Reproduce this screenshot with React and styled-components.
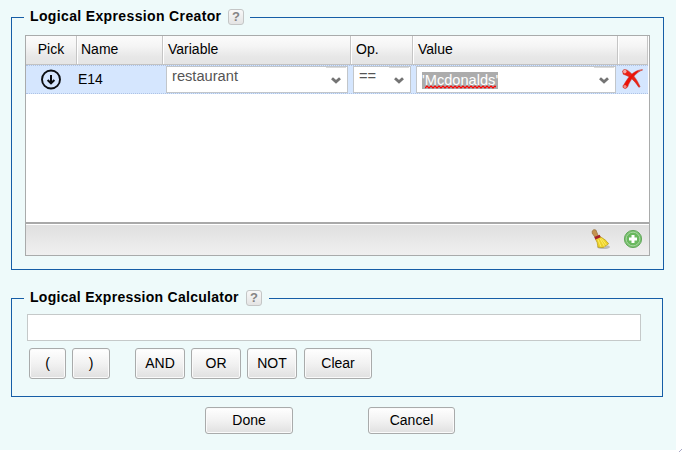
import React from "react";
import styled, { createGlobalStyle } from "styled-components";

const GlobalStyle = createGlobalStyle`
  * { box-sizing: border-box; }
  body { margin: 0; background: #fff; overflow: hidden; }
`;

const Window = styled.div`
  position: relative;
  width: 682px;
  height: 452px;
  overflow: hidden;
  background: #fff;
  font: 14px/16px "Liberation Sans", Arial, sans-serif;
  color: #000;
`;

const Page = styled.main`
  display: flow-root;
  width: 676px;
  height: 450px;
  padding-left: 11px;
  background: #eefafa;
`;

const Group = styled.fieldset`
  min-width: 0;
  width: ${(p) => p.$width}px;
  height: ${(p) => p.$height}px;
  margin: ${(p) => p.$top}px 0 0;
  padding: 0 0 0 ${(p) => p.$inset}px;
  border: 1px solid #165da6;
`;

const Legend = styled.legend`
  display: flex;
  align-items: flex-start;
  width: ${(p) => p.$width}px;
  height: 19px;
  margin-left: ${(p) => 12 - p.$inset}px;
  padding: 1px 0 0 6px;
  font-weight: bold;
  white-space: nowrap;
`;

const LegendText = styled.span`
  width: ${(p) => p.$width}px;
  margin-top: -1px;
  letter-spacing: ${(p) => p.$track}px;
`;

const Help = styled.button`
  width: 16px;
  height: 16px;
  padding: 0;
  border: 1px solid #c4c6c6;
  border-radius: 3px;
  background: linear-gradient(#f8f8f8, #e4e4e4);
  color: #848484;
  font: bold 13px/14px "Liberation Sans", Arial, sans-serif;
`;

const Table = styled.section`
  display: flex;
  flex-direction: column;
  width: 625px;
  height: 221px;
  margin-top: 8px;
  border: 1px solid #a9abab;
  background: #fff;
`;

const columns = "51px 86px 188px 62px 205px 30px";

const Header = styled.div`
  display: grid;
  grid-template-columns: ${columns};
  width: 622px;
  height: 29px;
  border-bottom: 1px solid #c2c2c2;
  background: linear-gradient(#fbfbfb, #f5f5f5 35%, #e7e7e7 75%, #e5e5e5);
`;

const HeaderCell = styled.div`
  padding: 5px 0 0 ${(p) => (p.$center ? 0 : p.$indent ?? 4)}px;
  text-align: ${(p) => (p.$center ? "center" : "left")};
  border-left: ${(p) => (p.$center ? 0 : 1)}px solid #fff;
  border-right: 1px solid #c5c5c5;
`;

const Row = styled.div`
  display: grid;
  grid-template-columns: 50px 90px 187px 63px 202px 30px;
  width: 622px;
  height: 29px;
  border-top: 1px dotted #aec3e5;
  border-bottom: 1px dotted #aec3e5;
  background: #d5e6fe;
`;

const PickCell = styled.div`
  padding-top: 3px;
  text-align: center;
  line-height: 0;
`;

const NameCell = styled.div`
  padding: 5px 0 0 2px;
`;

const DeleteCell = styled.div`
  padding: 3px 0 0 4px;
  line-height: 0;
`;

const Combo = styled.div`
  display: flex;
  justify-content: space-between;
  width: ${(p) => p.$width}px;
  height: 27px;
  padding-left: 5px;
  border: 1px solid #c2c6ca;
  background: #fff;
  color: #555;
  font-size: 14.67px;
`;

const ComboText = styled.span`
  padding-top: 1px;
`;

const Selected = styled.span`
  align-self: flex-start;
  height: 17px;
  margin-top: 5px;
  background: #acacac;
  color: #fff;
  line-height: 17px;
  font-size: 14.6px;
`;

const Misspelt = styled.span`
  display: inline-block;
  position: relative;
`;

const Squiggle = styled.svg`
  position: absolute;
  left: 0;
  top: 13px;
`;

const Toggle = styled.span`
  display: flex;
  justify-content: center;
  width: 20px;
  height: 24px;
  margin-right: 1px;
  border-top: 1px solid #dadada;
  padding-top: 9px;
`;

const Footer = styled.div`
  display: flex;
  align-items: flex-start;
  justify-content: flex-end;
  gap: 12px;
  height: 33px;
  margin-top: auto;
  padding: 5px 6px 0 0;
  border-top: 2px solid #a9a9a9;
  box-shadow: inset 0 1px #fff;
  background: linear-gradient(#dfdfdf, #f0f0f0);
`;

const Expression = styled.input`
  display: block;
  width: 614px;
  height: 27px;
  margin: 6px 0 7px;
  border: 1px solid #c5c9c9;
  padding: 0 5px;
  background: #fff;
`;

const Keys = styled.div`
  display: flex;
  gap: 6px;
  padding-left: 2px;
`;

const Button = styled.button`
  width: ${(p) => p.$width}px;
  height: ${(p) => p.$height || 31}px;
  margin-left: ${(p) => p.$space || 0}px;
  padding: 0 0 1px;
  border: 1px solid #a9abab;
  border-radius: 3px;
  background: linear-gradient(#fff, #f2f2f2 50%, #e0e0e0);
  box-shadow: inset 0 0 0 1px #fafafa;
  color: #000;
  font: 14px/16px "Liberation Sans", Arial, sans-serif;
`;

const Actions = styled.div`
  display: flex;
  gap: 75px;
  padding: 10px 0 0 194px;
`;

const Grip = styled.svg`
  position: absolute;
  right: 0;
  bottom: 0;
`;

const Chevron = () => (
  <Toggle>
    <svg width="10" height="8" viewBox="0 0 10 8">
      <path d="M1 1.2 5 4.9 9 1.2" fill="none" stroke="#747474" strokeWidth="2.8" />
    </svg>
  </Toggle>
);

const PickIcon = () => (
  <svg width="22" height="22" viewBox="0 0 22 22" fill="none" stroke="#0b0e12">
    <circle cx="11" cy="10.5" r="9" strokeWidth="1.9" />
    <path d="M11 6v8M7.6 11 11 14.3 14.4 11" strokeWidth="2" />
  </svg>
);

const DeleteIcon = () => (
  <svg width="22" height="22" viewBox="0 0 22 22">
    <path d="M.5 2Q1.5-.2 4.8.9C9.6 3.5 15 10 18 17.6Q17.5 19 16.4 17.8C12.8 12 8.4 7.5 1.2 5.2Z" fill="#ed2014" stroke="#bd3027" strokeWidth=".5" />
    <path d="M20.5.8C13.8 3.8 8.5 10.2 5.6 18Q3.2 21 .9 18.3Q.6 16.6 2 15.4C6.2 8 12.4.5 20.5.8Z" fill="#ed1208" stroke="#c43a31" strokeWidth=".5" />
    <circle cx="2.8" cy="2.6" r="1.8" fill="#f5aaa4" />
    <circle cx="3" cy="17.6" r="1.6" fill="#ee8d86" />
    <path d="M16 2.2 20.5 1" stroke="#d86660" />
  </svg>
);

const BroomIcon = () => (
  <svg width="20" height="21" viewBox="0 0 20 21">
    <ellipse cx="12.5" cy="18" rx="6.5" ry="2" fill="#bcbcbc" />
    <path d="M1.2 2.1Q2.5-.3 4.9 1L7.5 7.4 4.2 8.6 1.2 4.2Z" fill="#c4934f" stroke="#96703c" strokeWidth=".7" />
    <path d="M4.5 10 9.4 7.8C13.6 10.2 15.8 12 17.6 14.8L12.3 18.5 7 18.3Q6.6 13 4.5 10Z" fill="#ecd12b" stroke="#b59819" strokeWidth=".7" />
    <path d="m7 10.5 3 7.2m-1-8.2 4.5 8m-3-8 5 6.8" stroke="#fff06b" strokeWidth=".9" />
    <path d="M3.8 9.3 9.2 7" stroke="#a6202a" strokeWidth="2.6" />
  </svg>
);

const AddIcon = () => (
  <svg width="20" height="20" viewBox="0 0 20 20">
    <circle cx="10" cy="10" r="8.6" fill="#78bf6d" stroke="#64a95d" />
    <circle cx="10" cy="10" r="6.8" fill="#69b85e" stroke="#a4d69d" />
    <path d="M10 6v8M6 10h8" stroke="#fff" strokeWidth="3" />
  </svg>
);

export default function App() {
  return (
    <Window>
      <GlobalStyle />
      <Page>
        <Group $top={8} $width={653} $height={262} $inset={13}>
          <Legend $width={226} $inset={13}>
            <LegendText $width={198} $track={0.36}>Logical Expression Creator</LegendText>
            <Help>?</Help>
          </Legend>
          <Table>
            <Header>
              <HeaderCell $center>Pick</HeaderCell>
              <HeaderCell $indent={3}>Name</HeaderCell>
              <HeaderCell>Variable</HeaderCell>
              <HeaderCell>Op.</HeaderCell>
              <HeaderCell>Value</HeaderCell>
              <HeaderCell />
            </Header>
            <Row>
              <PickCell><PickIcon /></PickCell>
              <NameCell>E14</NameCell>
              <Combo $width={182}><ComboText>restaurant</ComboText><Chevron /></Combo>
              <Combo $width={58}><ComboText>==</ComboText><Chevron /></Combo>
              <Combo $width={200}>
                <Selected>
                  '<Misspelt>Mcdonalds
                    <Squiggle width="71" height="4" viewBox="0 0 71 4">
                      <path d={"M0 3" + "l2-2 2 2".repeat(18)} fill="none" stroke="#f00" strokeWidth="1.2" />
                    </Squiggle>
                  </Misspelt>'
                </Selected>
                <Chevron />
              </Combo>
              <DeleteCell><DeleteIcon /></DeleteCell>
            </Row>
            <Footer><BroomIcon /><AddIcon /></Footer>
          </Table>
        </Group>
        <Group $top={19} $width={652} $height={108} $inset={15}>
          <Legend $width={245} $inset={15}>
            <LegendText $width={216} $track={0.28}>Logical Expression Calculator</LegendText>
            <Help>?</Help>
          </Legend>
          <Expression aria-label="Expression" />
          <Keys>
            <Button $width={37}>(</Button>
            <Button $width={38}>)</Button>
            <Button $width={50} $space={19}>AND</Button>
            <Button $width={50}>OR</Button>
            <Button $width={50}>NOT</Button>
            <Button $width={68} $space={1}>Clear</Button>
          </Keys>
        </Group>
        <Actions>
          <Button $width={88} $height={27}>Done</Button>
          <Button $width={87} $height={27}>Cancel</Button>
        </Actions>
      </Page>
      <Grip width="4" height="5" viewBox="0 0 4 5"><path d="M1 5 4 2" stroke="#aaa9c7" /></Grip>
    </Window>
  );
}
